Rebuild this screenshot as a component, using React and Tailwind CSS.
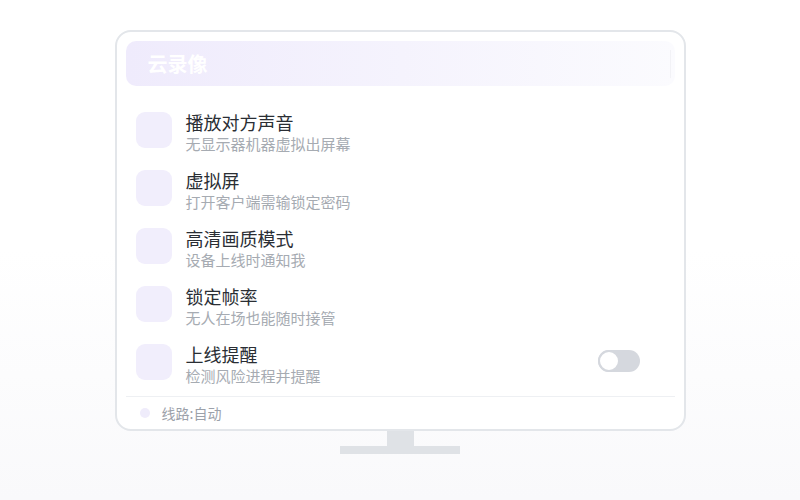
import React, { useState } from 'react';

const rows = [
  { title: '播放对方声音', desc: '无显示器机器虚拟出屏幕' },
  { title: '虚拟屏', desc: '打开客户端需输锁定密码' },
  { title: '高清画质模式', desc: '设备上线时通知我' },
  { title: '锁定帧率', desc: '无人在场也能随时接管' },
  { title: '上线提醒', desc: '检测风险进程并提醒', toggle: true },
];

const Toggle = ({ on, onChange }) => (
  <button
    onClick={() => onChange(!on)}
    className={`mt-[6px] mr-[25px] w-[42px] h-[22px] rounded-full flex ${on ? 'bg-[#8b7cf6] justify-end' : 'bg-[#d5d8de] justify-start'}`}
  >
    <span className="w-[22px] h-[22px] rounded-full bg-white border-2 border-[#d5d8de]"></span>
  </button>
);

const App = () => {
  const [alert, setAlert] = useState(false);

  return (
    <div
      className="w-full h-[500px] flex flex-col items-center pt-[30px] bg-gradient-to-b from-white from-50% to-[#f9f9fb]"
      style={{ fontFamily: '"Noto Sans CJK SC", "Noto Sans", sans-serif' }}
    >
      {/* Monitor */}
      <div className="w-[571px] h-[401px] bg-white border-2 border-[#e3e6ea] rounded-[16px] px-[9px] pt-[9px] flex flex-col">
        {/* Header */}
        <div className="h-[45px] shrink-0 rounded-[10px] bg-gradient-to-r from-[#efebfc] to-[#fbfbfe] flex items-center justify-between pl-[22px] pr-[4px]">
          <span className="text-white text-[20px] font-bold leading-none">云录像</span>
          <span className="w-px h-[28px] bg-[#f2f2f6]"></span>
        </div>

        {/* Options */}
        <div className="flex flex-col gap-[14px] px-[10px] pt-[26px]">
          {rows.map((row) => (
            <div key={row.title} className="flex items-start h-[44px]">
              <div className="w-[36px] h-[36px] rounded-[9px] bg-[#f1eefc] shrink-0"></div>
              <div className="ml-[14px] flex-1 flex flex-col">
                <span className="text-[18px] leading-[20px] text-[#2a2e34]">{row.title}</span>
                <span className="text-[15px] leading-[24px] text-[#a6abb2]">{row.desc}</span>
              </div>
              {row.toggle && <Toggle on={alert} onChange={setAlert} />}
            </div>
          ))}
        </div>

        {/* Footer */}
        <div className="mt-[8px] border-t border-[#eef0f3] flex-1 flex items-center pl-[14px]">
          <span className="w-[10px] h-[10px] rounded-full bg-[#efecfb]"></span>
          <span className="ml-[12px] text-[14px] text-[#9ca1aa]">线路:自动</span>
        </div>
      </div>

      {/* Stand */}
      <div className="w-[27px] h-[15px] bg-[#dfe2e6]"></div>
      <div className="w-[120px] h-[8px] bg-[#dfe2e6]"></div>
    </div>
  );
};

export default App;
